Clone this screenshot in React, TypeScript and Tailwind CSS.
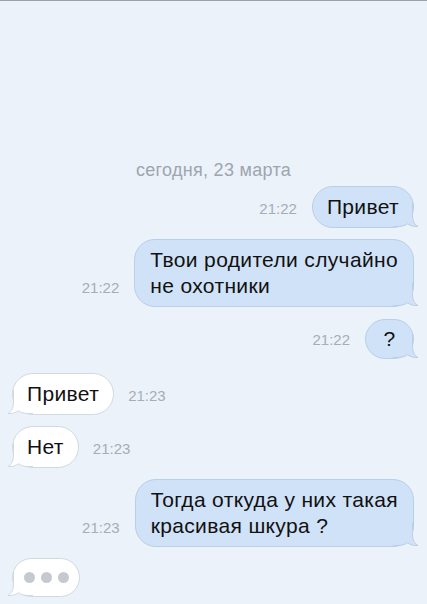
import type { ReactNode } from "react";

const font = { fontFamily: '"Liberation Sans", Arial, sans-serif' };

function Tail({ out }: { out: boolean }) {
  const fill = out ? "#d0e2f7" : "#ffffff";
  const stroke = out ? "#b9cee8" : "#d3d9e1";
  return (
    <svg
      width="26"
      height="24"
      viewBox="0 0 26 24"
      className={
        out
          ? "absolute -right-[6px] bottom-0"
          : "absolute -left-[6px] bottom-0 -scale-x-100"
      }
    >
      <path
        d="M19.5 0 L19.5 12 C19.5 18 21.5 21.5 25 23.5 C21 24 17.5 22.8 14.5 20.8 C12 22.8 8 23.5 4 23.5 L0 23.5 L0 0 Z"
        fill={fill}
      />
      <path
        d="M19.5 0 L19.5 12 C19.5 18 21.5 21.5 25 23.5 C21 24 17.5 22.8 14.5 20.8 C12 22.8 8 23.5 4 23.5 L0 23.5"
        fill="none"
        stroke={stroke}
        strokeWidth="1"
      />
    </svg>
  );
}

function Bubble({
  out,
  children,
  className = "",
}: {
  out: boolean;
  children: ReactNode;
  className?: string;
}) {
  return (
    <div
      className={`relative rounded-[21px] border text-[21px] leading-[26px] tracking-[0.35px] text-[#111111] ${
        out ? "bg-[#d0e2f7] border-[#b9cee8]" : "bg-white border-[#d3d9e1]"
      } ${className}`}
    >
      <Tail out={out} />
      <div className="relative">{children}</div>
    </div>
  );
}

function Time({ t }: { t: string }) {
  return (
    <span className="mb-[11px] text-[15px] leading-[16px] text-[#a6adb7]">{t}</span>
  );
}

function Out({ time, children, className = "", mt }: { time: string; children: ReactNode; className?: string; mt: string }) {
  return (
    <div className={`flex items-end justify-end gap-[15px] pr-[13px] ${mt}`}>
      <Time t={time} />
      <Bubble out className={className}>
        {children}
      </Bubble>
    </div>
  );
}

function In({ time, children, className = "", mt }: { time: string; children: ReactNode; className?: string; mt: string }) {
  return (
    <div className={`flex items-end gap-[14px] pl-[12px] ${mt}`}>
      <Bubble out={false} className={className}>
        {children}
      </Bubble>
      <Time t={time} />
    </div>
  );
}

export default function App() {
  return (
    <div
      className="h-[604px] w-[427px] overflow-hidden border-t border-[#9aa1ab] bg-[#ebf2fa]"
      style={font}
    >
      <div className="flex flex-col">
        <div className="mt-[159px] text-center text-[18px] leading-[20px] tracking-[0.3px] text-[#9ea5af]">
          сегодня, 23 марта
        </div>

        <Out time="21:22" mt="mt-[6px]" className="px-[14px] py-[7px]">
          Привет
        </Out>

        <Out time="21:22" mt="mt-[11px]" className="px-[15px] py-[7px]">
          <div>Твои родители случайно</div>
          <div>не охотники</div>
        </Out>

        <Out time="21:22" mt="mt-[12px]" className="flex h-[40px] w-[49px] items-center justify-center">
          ?
        </Out>

        <In time="21:23" mt="mt-[14px]" className="px-[14px] py-[7px]">
          Привет
        </In>

        <In time="21:23" mt="mt-[11px]" className="px-[14px] py-[7px]">
          Нет
        </In>

        <Out time="21:23" mt="mt-[11px]" className="px-[15px] py-[7px]">
          <div>Тогда откуда у них такая</div>
          <div>красивая шкура ?</div>
        </Out>

        <div className="mt-[11px] pl-[12px]">
          <Bubble out={false} className="flex h-[39px] w-[68px] items-center justify-center">
            <div className="flex h-[37px] items-center gap-[6px]">
              <span className="h-[11px] w-[11px] rounded-full bg-[#c6cad0]" />
              <span className="h-[11px] w-[11px] rounded-full bg-[#c6cad0]" />
              <span className="h-[11px] w-[11px] rounded-full bg-[#c6cad0]" />
            </div>
          </Bubble>
        </div>
      </div>
    </div>
  );
}
